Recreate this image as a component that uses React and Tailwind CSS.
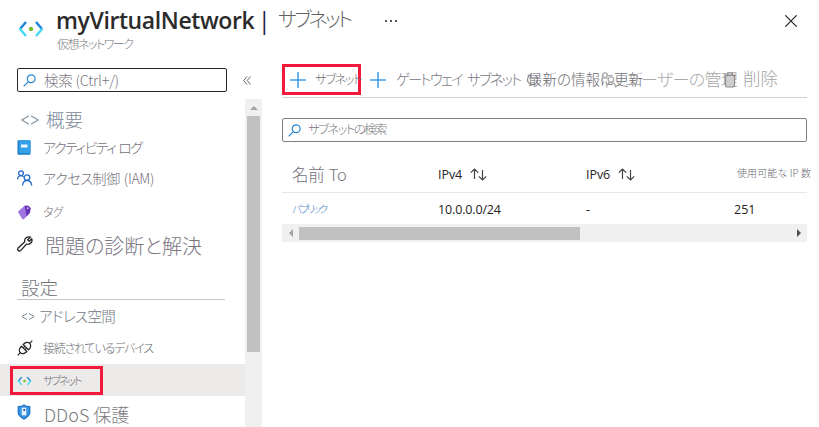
import React from "react";

function NetworkIcon({ className }) {
  return (
    <svg viewBox="0 0 26 18" className={className} fill="none" strokeWidth="2.4">
      <path d="M8 2L2 9" stroke="#1b83d8" />
      <path d="M1.5 8.5L8 16" stroke="#45d8f5" />
      <path d="M18 2L24 9" stroke="#1b83d8" />
      <path d="M24.5 8.5L18 16" stroke="#45d8f5" />
      <circle cx="13" cy="9" r="2.2" fill="#76bc2d" />
    </svg>
  );
}

function SearchIcon({ className }) {
  return (
    <svg viewBox="0 0 13 13" className={className} fill="none" stroke="#2684d0" strokeWidth="1.2">
      <circle cx="8.2" cy="4.8" r="3.9" />
      <path d="M5.4 7.6L0.6 12.4" />
    </svg>
  );
}

function PlusIcon() {
  return (
    <svg viewBox="0 0 16 16" className="h-4 w-4 shrink-0" stroke="#4a9fe2" strokeWidth="1.6">
      <path d="M8 0V16M0 8H16" />
    </svg>
  );
}

function RefreshIcon() {
  return (
    <svg viewBox="0 0 11 11" className="h-[11px] w-[11px] shrink-0" fill="none" stroke="#8c8c9a" strokeWidth="1.2">
      <path d="M3 1.300A5 5 0 1 0 8.500 1.600M3.500 4V1H0.600" />
    </svg>
  );
}

function BookIcon() {
  return (
    <svg viewBox="0 0 14 15" className="h-[15px] w-3.5">
      <rect x="0.5" y="0.3" width="13" height="14.4" rx="1.2" fill="#1c7cc8" />
      <rect x="2" y="0.3" width="11.5" height="13" rx="1" fill="#35a0e8" />
      <rect x="4" y="4.5" width="6.5" height="3" fill="#eaf6ff" />
    </svg>
  );
}

function PeopleIcon({ className, color }) {
  return (
    <svg viewBox="0 0 16 16" className={className} fill="none" stroke={color} strokeWidth="1.3">
      <circle cx="4" cy="3.2" r="2.400" />
      <path d="M0.600 9.500C0.800 7 2.200 5.700 4 5.700c1.200 0 2 .4 2.700 1.200" />
      <circle cx="10" cy="7.600" r="2.800" />
      <path d="M5.600 15.500c.2-3.200 1.900-5 4.400-5s4.400 1.800 4.700 5" />
    </svg>
  );
}

function TagIcon() {
  return (
    <svg viewBox="0 0 14 15" className="h-[15px] w-3.5">
      <path d="M0.800 6.800L7.600 0.800 12.200 1.200 13.600 3 13 7.800 6.800 14.200 5.400 14.200Z" fill="#a077e0" />
      <path d="M7.600 0.800L10.600 0.600 13.600 3 13 7.800 9.500 11.400Z" fill="#6a35b5" />
      <circle cx="10.800" cy="3.200" r="0.900" fill="#d9c5f7" />
    </svg>
  );
}

function WrenchIcon() {
  return (
    <svg viewBox="0 0 16 16" className="h-4 w-4" fill="none" stroke="#222" strokeWidth="1.3">
      <path d="M13.300 1.200a4 4 0 0 0-5.500 4.600L1.200 11.900a1.700 1.700 0 0 0 2.600 2.500L9.600 8a4 4 0 0 0 5.100-5.200L12.200 5.300 10.700 3.800Z" />
    </svg>
  );
}

function PlugIcon() {
  return (
    <svg viewBox="0 0 16 16" className="h-4 w-4" fill="none" stroke="#222" strokeWidth="1.200">
      <path d="M0.700 15.300L3.300 12.700M12.700 3.300L15.300 0.700" />
      <path d="M4.500 6.200L9.800 11.500C7.600 13.900 5 14.400 3.300 12.700S2.100 8.400 4.500 6.200Z" />
      <path d="M6.200 4.500L11.500 9.800C13.900 7.600 14.400 5 12.700 3.300S8.400 2.100 6.200 4.500Z" />
      <path d="M6 8.200L7.800 6.400M7.800 10L9.600 8.200" />
    </svg>
  );
}

function ShieldIcon() {
  return (
    <svg viewBox="0 0 14 16" className="h-4 w-3.5">
      <path d="M7 0.300C5 1.800 3 2.200 0.600 2.300V8c0 3.500 3.200 6 6.400 7.700C10.200 14 13.400 11.500 13.400 8V2.300C11 2.200 9 1.800 7 0.300Z" fill="#1b72c4" />
      <path d="M7 1.600C5.300 2.700 3.700 3.100 1.800 3.300V8c0 2.800 2.600 4.900 5.200 6.300C9.600 12.900 12.200 10.800 12.200 8V3.300C10.300 3.100 8.700 2.700 7 1.600Z" fill="#3a96e6" />
      <rect x="4.800" y="3.700" width="4.400" height="7.600" fill="#e8f2fb" />
      <rect x="6.300" y="5" width="1.800" height="2" fill="#2a5f96" />
    </svg>
  );
}

function AngleIcon({ className }) {
  return (
    <svg viewBox="0 0 18 10" className={className} fill="none" stroke="#8794a3" strokeWidth="1.100">
      <path d="M8 0.700L0.800 5 8 9.300M10 0.700L17.200 5 10 9.300" />
    </svg>
  );
}

function SmallAngleIcon() {
  return (
    <svg viewBox="0 0 14 7" className="h-[7px] w-3.5" fill="none" stroke="#7c8490" strokeWidth="1">
      <path d="M6 0.500L0.800 3.500 6 6.500M8 0.500L13.200 3.500 8 6.500" />
    </svg>
  );
}

function SortIcon() {
  return (
    <svg viewBox="0 0 17 13" className="h-[13px] w-[17px]" fill="none" stroke="#444" strokeWidth="1.200">
      <path d="M4.500 11V1M0.800 4.700L4.500 1 8.200 4.700M12.500 2V12M8.800 8.300L12.500 12 16.200 8.300" />
    </svg>
  );
}

function TrashIcon() {
  return (
    <svg viewBox="0 0 12 16" className="h-4 w-3" fill="#cfcfcf" stroke="#8c8c8c" strokeWidth="1.200">
      <path d="M1.500 3.500V13.500Q1.500 15 3 15H9Q10.500 15 10.500 13.500V3.500Z" />
      <path d="M0.500 3H11.500M3.500 2.500V1H8.500V2.500" fill="none" />
    </svg>
  );
}

function NavRow({ icon, height, iconClass = "pl-[17px] w-[43px]", text, textClass }) {
  return (
    <div className={`flex shrink-0 items-center ${height}`}>
      <div className={`shrink-0 ${iconClass}`}>{icon}</div>
      <span className={textClass}>{text}</span>
    </div>
  );
}

function Sidebar() {
  return (
    <aside className="flex w-[262px] shrink-0 flex-col">
      <div className="flex h-[43px] items-start pt-3">
        <div className="ml-[17px] flex h-6 w-[210px] items-center rounded-[2px] border border-[#262626] pl-[5px]">
          <SearchIcon className="h-[13px] w-[13px]" />
          <span className="ml-2 pb-px text-[14.500px] tracking-[-0.250px] text-[#77777f]">検索 (Ctrl+/)</span>
        </div>
        <svg viewBox="0 0 8 9" className="mt-2 ml-4 h-[9px] w-2" fill="none" stroke="#666" strokeWidth="1">
          <path d="M4 0.500L0.700 4.500 4 8.500M7.500 0.500L4.200 4.500 7.500 8.500" />
        </svg>
      </div>
      <div className="flex h-[328px] overflow-hidden">
        <nav className="flex w-[245px] flex-col pt-1.5">
          <NavRow height="h-[29px]" iconClass="pl-[21px] w-[46px]" icon={<AngleIcon className="h-2.5 w-[18px]" />} text="概要" textClass="text-[18.500px] text-[#7d8b9b]" />
          <NavRow height="h-[27px]" icon={<BookIcon />} text="アクティビティ ログ" textClass="text-[14px] tracking-[-1.500px] [word-spacing:1px] text-[#77727c]" />
          <NavRow height="h-[34px]" icon={<PeopleIcon className="h-4 w-4" color="#2468c8" />} text="アクセス制御 (IAM)" textClass="text-[14px] tracking-[-0.300px] [word-spacing:1px] text-[#77727c]" />
          <NavRow height="h-[34px]" icon={<TagIcon />} text="タグ" textClass="text-[12px] tracking-[-1px] text-[#77727c]" />
          <NavRow height="h-[33px]" iconClass="pl-[17px] pb-1 w-[45px]" icon={<WrenchIcon />} text="問題の診断と解決" textClass="text-[20px] text-[#7a757f]" />
          <div className="mb-0.5 ml-[17px] flex h-[38px] w-[208px] shrink-0 items-end border-b border-[#c4c4c4] pb-px pl-1">
            <span className="text-[18.500px] leading-[22px] text-[#737379]">設定</span>
          </div>
          <NavRow height="h-[29px]" iconClass="pl-[21px] w-[39px]" icon={<SmallAngleIcon />} text="アドレス空間" textClass="pb-0.5 text-[14.500px] tracking-[-0.600px] text-[#707884]" />
          <NavRow height="h-[33px]" icon={<PlugIcon />} text="接続されているデバイス" textClass="text-[12px] tracking-[-1.200px] text-[#6c6c72]" />
          <div className="flex h-8 shrink-0 bg-[#edebe9] pt-0.5 pl-2.5">
            <div className="flex h-[29px] w-[93px] items-center border-[3px] border-[#f3193a] pl-1">
              <NetworkIcon className="h-2.5 w-[15px]" />
              <span className="ml-[11px] pb-px text-[11px] tracking-[-2.100px] text-[#6c6c72]">サブネット</span>
            </div>
          </div>
          <NavRow height="h-[31px]" iconClass="pl-[17px] w-[44px]" icon={<ShieldIcon />} text="DDoS 保護" textClass="pt-1 text-[18px] leading-6 text-[#7a7a80]" />
        </nav>
        <div className="flex w-[17px] flex-col items-center bg-[#f0f0f0]">
          <div className="flex h-[17px] items-center">
            <svg viewBox="0 0 8 4" className="h-1 w-2" fill="#a3a3a3"><path d="M0 4L4 0 8 4Z" /></svg>
          </div>
          <div className="h-[236px] w-[13px] bg-[#c1c1c1]" />
        </div>
      </div>
    </aside>
  );
}

function Toolbar() {
  return (
    <div className="flex h-[42px] w-[525px] items-start border-b border-[#d0d0d0] pt-2">
      <div className="flex h-[31px] w-[79px] shrink-0 items-center border-[3px] border-[#f3193a] pl-[5px]">
        <PlusIcon />
        <span className="ml-[9px] w-10 pb-px text-[12.500px] tracking-[-1.600px] text-[#6c6c72]">サブネット</span>
      </div>
      <div className="ml-[9px] flex h-[31px] w-[157px] shrink-0 items-center">
        <PlusIcon />
        <span className="ml-2.5 pb-0.5 text-[14.500px] tracking-[-1.900px] [word-spacing:4px] text-[#77777f]">ゲートウェイ サブネット</span>
      </div>
      <div className="flex h-[31px] w-[74px] shrink-0 items-center">
        <RefreshIcon />
        <span className="-ml-2.5 pb-0.5 text-[14.500px] text-[#6c6c72]">最新の情報に更新</span>
      </div>
      <div className="flex h-[31px] w-[121px] shrink-0 items-center">
        <PeopleIcon className="h-4 w-4 shrink-0" color="#aaaaaa" />
        <span className="ml-2 pb-0.5 text-[17px] tracking-[-0.600px] text-[#a9a9a9]">ユーザーの管理</span>
      </div>
      <div className="flex h-[31px] shrink-0 items-center pl-0.5">
        <TrashIcon />
        <span className="ml-[7px] pb-0.5 text-[17.500px] text-[#a6a6a6]">削除</span>
      </div>
    </div>
  );
}

function Table() {
  return (
    <div className="w-[525px]">
      <div className="flex h-[36px] items-center border-b border-[#e6e6e6] text-[#222]">
        <span className="w-[156px] shrink-0 pb-px pl-2.5 text-[16.500px] tracking-[-0.300px] [word-spacing:1px] text-[#77727c]">名前 To</span>
        <div className="flex w-[148px] shrink-0 items-center">
          <span className="w-[32px] pt-px font-['Open_Sans'] text-[12.500px] font-medium tracking-[-0.050px]">IPv4</span>
          <SortIcon />
        </div>
        <div className="flex w-[151px] shrink-0 items-center">
          <span className="w-[32px] pt-px font-['Open_Sans'] text-[12.500px] font-medium tracking-[-0.050px]">IPv6</span>
          <SortIcon />
        </div>
        <span className="pb-1 text-[10px] tracking-[0.100px] text-[#6c6c72]">使用可能な IP 数</span>
      </div>
      <div className="flex h-[31px] items-center font-['Open_Sans'] text-[12.500px] font-normal text-[#222]">
        <span className="w-[156px] shrink-0 pl-2.5 font-['Noto_Sans_CJK_JP'] text-[10.500px] font-light tracking-[-2.300px] text-[#4f8acb]">パブリック</span>
        <span className="w-[148px] shrink-0 pt-[3px] tracking-[-0.150px]">10.0.0.0/24</span>
        <span className="w-[148px] shrink-0 pt-[3px]">-</span>
        <span className="pt-[3px]">251</span>
      </div>
      <div className="flex h-[18px] items-center bg-[#f0f0f0]">
        <div className="flex w-[17px] justify-center">
          <svg viewBox="0 0 4 8" className="h-2 w-1" fill="#a3a3a3"><path d="M4 0L0 4 4 8Z" /></svg>
        </div>
        <div className="h-[13px] w-[281px] bg-[#c1c1c1]" />
        <svg viewBox="0 0 4 8" className="mr-1.5 ml-auto h-2 w-1" fill="#505050"><path d="M0 0L4 4 0 8Z" /></svg>
      </div>
    </div>
  );
}

export default function App() {
  return (
    <div className="h-[427px] w-[819px] overflow-hidden bg-white font-['Noto_Sans_CJK_JP',sans-serif] font-light whitespace-nowrap [font-feature-settings:'palt']">
      <header className="flex h-14 items-start">
        <NetworkIcon className="mt-5 ml-[18px] h-[18px] w-[26px]" />
        <div className="ml-3 flex w-[222px] flex-col">
          <h1 className="mt-1 flex h-8 font-['Open_Sans'] text-[23px] leading-8 font-semibold tracking-[-0.400px] text-[#2b2b2b]">
            <span className="w-[202px]">myVirtualNetwork</span>
            <span className="font-normal text-[#222244]">|</span>
          </h1>
          <span className="h-4 pl-px text-[12px] leading-4 tracking-[-1.500px] text-[#77777c]">仮想ネットワーク</span>
        </div>
        <span className="w-[107px] pt-1 text-[20px] leading-[30px] tracking-[-2.900px] text-[#626262]">サブネット</span>
        <svg viewBox="0 0 12 2" className="mt-5 h-0.5 w-3" fill="#555">
          <path d="M0 0h2v2h-2zM5 0h2v2h-2zM10 0h2v2h-2z" />
        </svg>
        <svg viewBox="0 0 12 12" className="mt-[15px] mr-[22px] ml-auto h-3 w-3" stroke="#222" strokeWidth="1.200">
          <path d="M0.300 0.300L11.700 11.700M11.700 0.300L0.300 11.700" />
        </svg>
      </header>
      <div className="flex">
        <Sidebar />
        <main className="flex flex-col pl-5">
          <Toolbar />
          <div className="mt-5 mb-[15px] flex h-6 w-[525px] items-center rounded-[2px] border border-[#808080] pl-[5px]">
            <SearchIcon className="h-[13px] w-[13px]" />
            <span className="ml-[7px] pb-0.5 text-[12.500px] tracking-[-1.700px] text-[#77777c]">サブネットの検索</span>
          </div>
          <Table />
        </main>
      </div>
    </div>
  );
}
